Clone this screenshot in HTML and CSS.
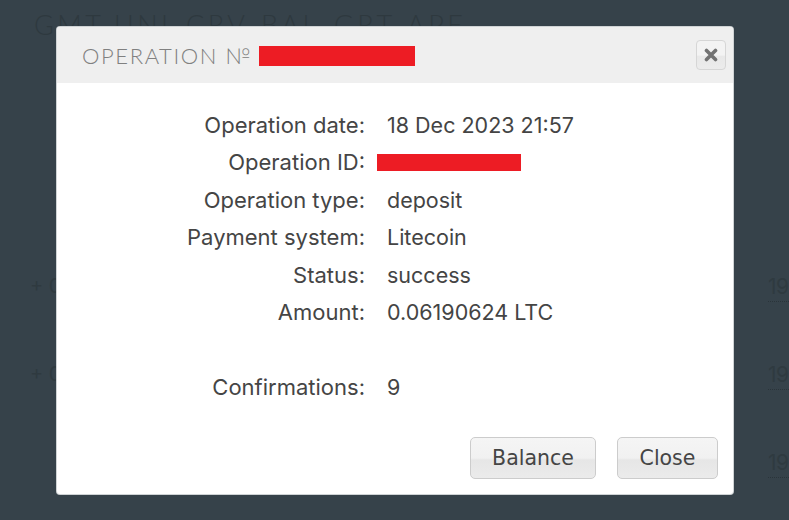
FILE: index.html
```html
<!DOCTYPE html>
<html>
<head>
<meta charset="utf-8">
<link rel="stylesheet" href="styles.css">
</head>
<body>
<div class="page">
  <div class="tickers">
    <span class="t t1">GMT</span><span class="t t2">UNI</span><span class="t t3">CRV</span><span class="t t4">BAL</span><span class="t t5">GRT</span><span class="t t6">APE</span>
  </div>
  <div class="bgrow r1"><span class="plus">+ 0</span><span class="num">19</span></div>
  <div class="bgrow r2"><span class="plus">+ 0</span><span class="num">19</span></div>
  <div class="bgrow r3"><span class="num">19</span></div>

  <div class="modal">
    <div class="modal-head">
      <span class="title">OPERATION №</span>
      <span class="redact redact-title"></span>
      <button class="x-btn" aria-label="close">
        <svg width="14" height="14" viewBox="0 0 14 14"><path d="M2.5 2.5 L11.5 11.5 M11.5 2.5 L2.5 11.5" stroke="#727272" stroke-width="3.6" stroke-linecap="round"/></svg>
      </button>
    </div>
    <div class="modal-body">
      <div class="info">
        <div class="lbl">Operation date:</div><div class="val">18 Dec 2023 21:57</div>
        <div class="lbl">Operation ID:</div><div class="val val-id"><span class="redact redact-id"></span></div>
        <div class="lbl">Operation type:</div><div class="val">deposit</div>
        <div class="lbl">Payment system:</div><div class="val">Litecoin</div>
        <div class="lbl">Status:</div><div class="val">success</div>
        <div class="lbl">Amount:</div><div class="val">0.06190624 LTC</div>
        <div class="lbl"></div><div class="val"></div>
        <div class="lbl">Confirmations:</div><div class="val">9</div>
      </div>
      <div class="foot">
        <button class="btn btn-balance">Balance</button>
        <button class="btn btn-close">Close</button>
      </div>
    </div>
  </div>
</div>
</body>
</html>
```

FILE: styles.css
```css
html, body {
  margin: 0;
  padding: 0;
}
body {
  width: 789px;
  height: 520px;
  overflow: hidden;
  background: #36424a;
  font-family: "Inter", "Liberation Sans", sans-serif;
}
.page {
  position: relative;
  width: 789px;
  height: 520px;
  overflow: hidden;
}
.tickers {
  position: absolute;
  top: 8px;
  left: 0;
  width: 789px;
  height: 30px;
}
.t {
  position: absolute;
  top: 0;
  font-family: "Lato", sans-serif;
  font-weight: 300;
  font-size: 27px;
  letter-spacing: 3.5px;
  color: #2e393f;
}
.t1 { left: 34px; }
.t2 { left: 114px; }
.t3 { left: 186px; }
.t4 { left: 261px; }
.t5 { left: 334px; }
.t6 { left: 407px; }
.bgrow {
  position: absolute;
  left: 0;
  width: 789px;
  height: 30px;
}
.r1 { top: 274px; }
.r2 { top: 362px; }
.r3 { top: 450px; }
.plus {
  position: absolute;
  left: 30px;
  font-size: 20px;
  color: #2f3a40;
}
.num {
  position: absolute;
  left: 768px;
  width: 21px;
  font-size: 21px;
  letter-spacing: -0.5px;
  color: #2f3a40;
  border-bottom: 1px dotted #2a343a;
  padding-bottom: 2px;
  white-space: nowrap;
  overflow: hidden;
}
.modal {
  position: absolute;
  top: 27px;
  left: 57px;
  width: 676px;
  height: 467px;
  background: #fff;
  border-radius: 3px;
  box-shadow: 0 0 0 1px #cfd3d5;
  overflow: hidden;
}
.modal-head {
  height: 56px;
  background: #efefef;
  display: flex;
  align-items: center;
  padding-left: 25px;
  padding-right: 7px;
}
.title {
  font-family: "Lato", sans-serif;
  font-weight: 300;
  font-size: 22px;
  letter-spacing: 1.6px;
  color: #808080;
}
.redact {
  display: inline-block;
  background: #ed1c24;
}
.redact-title {
  width: 156px;
  height: 20px;
  margin-left: 7px;
  margin-top: 1px;
}
.x-btn {
  margin-left: auto;
  width: 30px;
  height: 30px;
  border: 1px solid #d6d6d6;
  border-radius: 4px;
  background: linear-gradient(#f3f3f3 0%, #f3f3f3 50%, #e8e8e8 55%, #ececec 100%);
  padding: 0;
  display: flex;
  align-items: center;
  justify-content: center;
}
.x-btn svg { display: block; }
.modal-body {
  padding-top: 23px;
  display: flex;
  flex-direction: column;
}
.info {
  display: grid;
  grid-template-columns: 308px 1fr;
  grid-auto-rows: 37.5px;
  column-gap: 22px;
  align-items: center;
}
.lbl {
  text-align: right;
  font-size: 22px;
  color: #454545;
}
.val {
  font-size: 21.5px;
  color: #444444;
}
.val-id { margin-left: -10px; display: flex; align-items: center; }
.redact-id {
  width: 144px;
  height: 17px;
}
.foot {
  margin-top: 31px;
  display: flex;
  justify-content: flex-end;
  gap: 21px;
  padding-right: 15px;
}
.btn {
  height: 42px;
  font-family: "DejaVu Sans", sans-serif;
  font-size: 20.5px;
  color: #454545;
  border: 1px solid #cccccc;
  border-radius: 5px;
  background: linear-gradient(#f5f5f5 0%, #f1f1f1 50%, #e6e6e6 55%, #ebebeb 100%);
  padding: 0;
}
.btn-balance { width: 126px; }
.btn-close { width: 101px; }
```
